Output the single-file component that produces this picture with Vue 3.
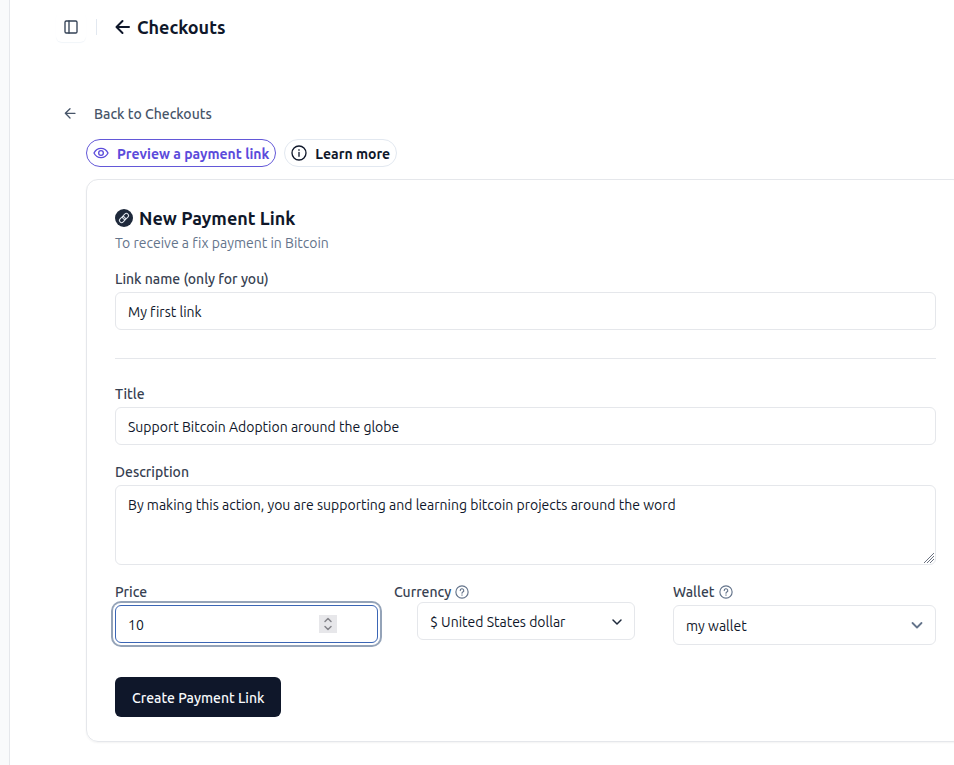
<script setup>
import { ref } from 'vue'

const linkName = ref('My first link')
const title = ref('Support Bitcoin Adoption around the globe')
const description = ref('By making this action, you are supporting and learning bitcoin projects around the word')
const price = ref(10)
const currency = ref('usd')
const wallet = ref('my')
</script>

<template>
  <div class="shell">
    <aside class="sidebar"></aside>
    <div class="page">
      <header class="topbar">
        <button class="toggle" type="button" aria-label="Toggle sidebar">
          <svg class="icon16" viewBox="0 0 24 24"><rect x="3" y="3" width="18" height="18" rx="2" /><path d="M9 3v18" /></svg>
        </button>
        <span class="divider"></span>
        <a class="crumb" href="#">
          <svg class="arrow" viewBox="0 0 20 20"><path d="M16 10H4M9.500 4L3.500 10l6 6" /></svg>
          <h1>Checkouts</h1>
        </a>
      </header>

      <main class="content">
        <a class="back" href="#">
          <svg class="icon16" viewBox="0 0 24 24"><path d="M12 18l-7-7 7-7M19.500 11H5" /></svg>
          <span>Back to Checkouts</span>
        </a>

        <div class="body">
          <div class="pills">
            <button class="pill pill-accent" type="button">
              <svg class="icon16" viewBox="0 0 24 24"><path d="M1.500 12C4 7 7.700 5 12 5s8 2 10.500 7c-2.500 5-6.200 7-10.500 7S4 17 1.500 12z" /><circle cx="12" cy="12" r="3.500" /></svg>
              <span>Preview a payment link</span>
            </button>
            <button class="pill" type="button">
              <svg class="icon16" viewBox="0 0 24 24"><circle cx="12" cy="12" r="10.500" /><path d="M12 17v-6M12 7v1" /></svg>
              <span>Learn more</span>
            </button>
          </div>

          <form class="card" @submit.prevent>
            <div class="heading">
              <svg class="badge" viewBox="0 0 18 18">
                <circle class="disc" cx="9" cy="9" r="9" />
                <g transform="rotate(-45 9 9)"><rect x="3.500" y="6.800" width="6.500" height="4.400" rx="2.200" /><rect x="8" y="6.800" width="6.500" height="4.400" rx="2.200" /></g>
              </svg>
              <h2>New Payment Link</h2>
            </div>
            <p class="sub">To receive a fix payment in Bitcoin</p>

            <div class="field">
              <label for="link-name">Link name (only for you)</label>
              <input id="link-name" v-model="linkName" class="control" type="text" />
            </div>

            <hr />

            <div class="stack">
              <div class="field">
                <label for="title">Title</label>
                <input id="title" v-model="title" class="control" type="text" />
              </div>
              <div class="field">
                <label for="description">Description</label>
                <div class="wrap">
                  <textarea id="description" v-model="description" class="control area"></textarea>
                  <svg class="grip" viewBox="0 0 10 10"><path d="M0 10L10 0M3 10l7-7M6 10l4-4" /></svg>
                </div>
              </div>
              <div class="columns">
                <div class="field">
                  <label for="price">Price</label>
                  <div class="wrap">
                    <input id="price" v-model="price" class="control active" type="number" />
                    <span class="spinner">
                      <svg viewBox="0 0 18 18"><path d="M6 6.500l3-3 3 3M6 11.500l3 3 3-3" /></svg>
                    </span>
                  </div>
                </div>
                <div class="field compact">
                  <label for="currency">Currency
                    <svg class="help" viewBox="0 0 24 24"><circle cx="12" cy="12" r="10.500" /><path d="M9 9.500a3 3 0 1 1 4.500 2.500c-1 .6-1.500 1-1.500 2M12 17v.6" /></svg>
                  </label>
                  <div class="wrap inset">
                    <select id="currency" v-model="currency" class="control">
                      <option value="usd">$ United States dollar</option>
                    </select>
                    <svg class="chevron dark" viewBox="0 0 12 12"><path d="M2 4l4 4 4-4" /></svg>
                  </div>
                </div>
                <div class="field">
                  <label for="wallet">Wallet
                    <svg class="help" viewBox="0 0 24 24"><circle cx="12" cy="12" r="10.500" /><path d="M9 9.500a3 3 0 1 1 4.500 2.500c-1 .6-1.500 1-1.500 2M12 17v.6" /></svg>
                  </label>
                  <div class="wrap">
                    <select id="wallet" v-model="wallet" class="control tall">
                      <option value="my">my wallet</option>
                    </select>
                    <svg class="chevron" viewBox="0 0 12 12"><path d="M1.500 4L6 8.500 10.500 4" /></svg>
                  </div>
                </div>
              </div>
            </div>

            <button class="submit" type="submit">Create Payment Link</button>
          </form>
        </div>
      </main>
    </div>
  </div>
</template>

<style>
body {
  margin: 0;
  background: #fff;
}
</style>

<style scoped>
* {
  box-sizing: border-box;
}
.shell {
  display: flex;
  min-height: 100vh;
  overflow: hidden;
  font-family: Ubuntu, "Noto Sans", sans-serif;
  font-size: 14px;
  font-variant-ligatures: none;
  line-height: 20px;
  color: #0f172a;
}
svg {
  flex: none;
  fill: none;
  stroke: currentColor;
  stroke-width: 2;
  stroke-linecap: round;
  stroke-linejoin: round;
}
button,
input,
select,
textarea {
  font: inherit;
  font-variant-ligatures: none;
  color: inherit;
}
h1,
h2,
p {
  margin: 0;
}
a {
  color: inherit;
  text-decoration: none;
}
.sidebar {
  width: 10px;
  flex: none;
  background: #f9fafb;
  border-right: 1px solid #e5e7eb;
}
.page {
  flex: 1;
  min-width: 0;
}
.topbar {
  display: flex;
  align-items: center;
  height: 54px;
  padding-left: 46px;
}
.toggle {
  display: flex;
  align-items: center;
  justify-content: center;
  width: 30px;
  height: 30px;
  padding: 0;
  border: 0;
  border-radius: 6px;
  background: #fff;
  color: #334155;
  box-shadow: 0 1px 1px #f1f5f9;
}
.icon16 {
  width: 16px;
  height: 16px;
}
.divider {
  width: 1px;
  height: 16px;
  margin: 0 16px 0 10px;
  background: #e2e8f0;
}
.crumb {
  display: flex;
  align-items: center;
  gap: 4px;
}
.arrow {
  width: 20px;
  height: 20px;
}
h1,
h2 {
  font-size: 18px;
  line-height: 28px;
  font-weight: 700;
}
.content {
  padding: 48px 0 24px 52px;
}
.back {
  display: flex;
  align-items: center;
  gap: 16px;
  height: 24px;
  font-weight: 500;
  color: #475569;
}
.body {
  padding: 13px 0 0 24px;
  margin-right: -11px;
}
.pills {
  display: flex;
  gap: 8px;
  margin-bottom: 12px;
}
.pill {
  display: flex;
  align-items: center;
  gap: 8px;
  height: 28px;
  padding: 0 6px;
  border: 1px solid #e2e8f0;
  border-radius: 14px;
  background: #fff;
  font-weight: 600;
  white-space: nowrap;
}
.pill span {
  padding-top: 2px;
}
.pill-accent {
  border-color: #6358d8;
  color: #5b4bdb;
}
.card {
  padding: 24px 28px;
  border: 1px solid #e5e7eb;
  border-radius: 12px;
  box-shadow: 0 1px 2px #0000000d;
}
.heading {
  display: flex;
  align-items: center;
  gap: 6px;
  margin-bottom: 1px;
}
.badge {
  width: 18px;
  height: 18px;
  color: #e2e8f0;
  stroke-width: 1;
}
.disc {
  fill: #1e293b;
  stroke: none;
}
.sub {
  margin-bottom: 16px;
  color: #64748b;
}
.field {
  display: flex;
  flex-direction: column;
  gap: 3px;
}
.compact {
  gap: 0;
}
label {
  display: flex;
  align-items: center;
  gap: 4px;
  font-weight: 500;
  color: #374151;
}
.help {
  width: 14px;
  height: 14px;
  color: #64748b;
}
.control {
  display: block;
  width: 100%;
  height: 38px;
  padding: 2px 12px 0;
  border: 1px solid #e5e7eb;
  border-radius: 6px;
  background: #fff;
  outline: none;
  appearance: none;
}
.area {
  height: 80px;
  padding: 9px 12px;
  resize: vertical;
}
.area::-webkit-resizer {
  background: transparent;
}
.grip {
  position: absolute;
  right: 2px;
  bottom: 2px;
  width: 10px;
  height: 10px;
  color: #6b7280;
  stroke-width: 1;
  pointer-events: none;
}
.tall {
  height: 40px;
}
.active {
  border-color: #3b66b5;
  box-shadow: 0 0 0 2px #fff, 0 0 0 4px #94a3b8;
  appearance: textfield;
}
hr {
  height: 1px;
  margin: 28px 0 25px;
  border: 0;
  background: #e5e7eb;
}
.stack {
  display: flex;
  flex-direction: column;
  gap: 17px;
}
.columns {
  display: grid;
  grid-template-columns: repeat(3, minmax(0, 1fr));
  gap: 16px;
}
.wrap {
  position: relative;
}
.inset {
  margin: 0 22px 0 23px;
}
.spinner {
  position: absolute;
  top: 10px;
  right: 41px;
  width: 18px;
  height: 18px;
  background: #e7e7ea;
  color: #85858b;
}
.spinner svg {
  display: block;
  stroke-width: 1.500;
}
.chevron {
  position: absolute;
  top: 14px;
  right: 13px;
  width: 12px;
  height: 12px;
  color: #64748b;
  stroke-width: 1.800;
  pointer-events: none;
}
.dark {
  right: 12px;
  color: #1e293b;
  stroke-width: 1.500;
}
.submit {
  display: block;
  height: 40px;
  margin-top: 32px;
  padding: 2px 17px 0;
  border: 0;
  border-radius: 6px;
  background: #0f172a;
  color: #f8fafc;
  font-weight: 500;
}
</style>
